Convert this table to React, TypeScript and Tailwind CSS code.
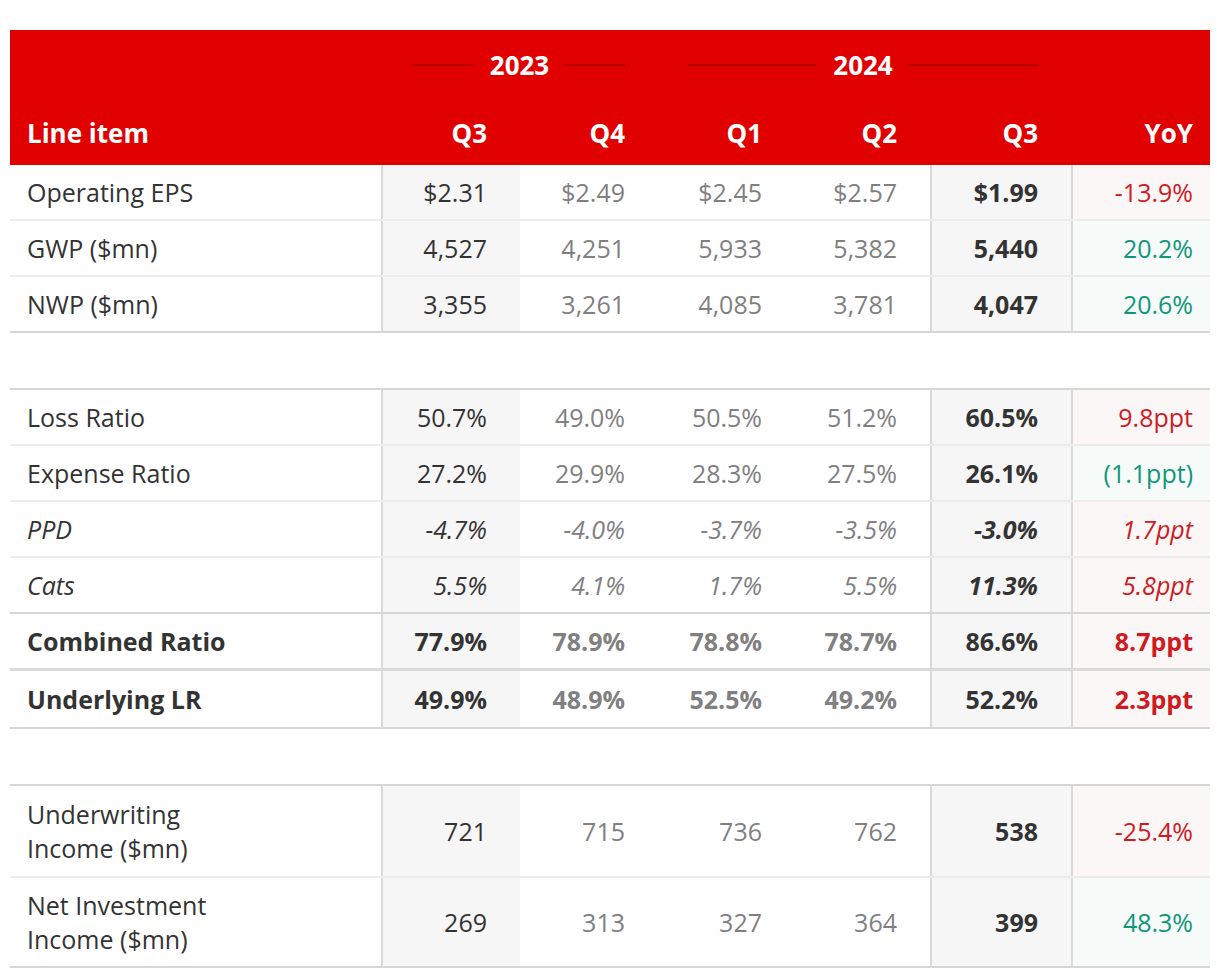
import React from "react";

type Tone = "red" | "green";

interface Row {
  label: string;
  q323: string;
  q4: string;
  q1: string;
  q2: string;
  q324: string;
  yoy: string;
  tone: Tone;
  style?: "italic" | "bold";
  height: string;
  border?: "section" | "double";
}

const sections: Row[][] = [
  [
    { label: "Operating EPS", q323: "$2.31", q4: "$2.49", q1: "$2.45", q2: "$2.57", q324: "$1.99", yoy: "-13.9%", tone: "red", height: "h-[56px]" },
    { label: "GWP ($mn)", q323: "4,527", q4: "4,251", q1: "5,933", q2: "5,382", q324: "5,440", yoy: "20.2%", tone: "green", height: "h-[56px]" },
    { label: "NWP ($mn)", q323: "3,355", q4: "3,261", q1: "4,085", q2: "3,781", q324: "4,047", yoy: "20.6%", tone: "green", height: "h-[56px]", border: "section" },
  ],
  [
    { label: "Loss Ratio", q323: "50.7%", q4: "49.0%", q1: "50.5%", q2: "51.2%", q324: "60.5%", yoy: "9.8ppt", tone: "red", height: "h-[56px]" },
    { label: "Expense Ratio", q323: "27.2%", q4: "29.9%", q1: "28.3%", q2: "27.5%", q324: "26.1%", yoy: "(1.1ppt)", tone: "green", height: "h-[56px]" },
    { label: "PPD", q323: "-4.7%", q4: "-4.0%", q1: "-3.7%", q2: "-3.5%", q324: "-3.0%", yoy: "1.7ppt", tone: "red", style: "italic", height: "h-[56px]" },
    { label: "Cats", q323: "5.5%", q4: "4.1%", q1: "1.7%", q2: "5.5%", q324: "11.3%", yoy: "5.8ppt", tone: "red", style: "italic", height: "h-[56px]", border: "section" },
    { label: "Combined Ratio", q323: "77.9%", q4: "78.9%", q1: "78.8%", q2: "78.7%", q324: "86.6%", yoy: "8.7ppt", tone: "red", style: "bold", height: "h-[57px]", border: "double" },
    { label: "Underlying LR", q323: "49.9%", q4: "48.9%", q1: "52.5%", q2: "49.2%", q324: "52.2%", yoy: "2.3ppt", tone: "red", style: "bold", height: "h-[58px]", border: "section" },
  ],
  [
    { label: "Underwriting Income ($mn)", q323: "721", q4: "715", q1: "736", q2: "762", q324: "538", yoy: "-25.4%", tone: "red", height: "h-[92px]" },
    { label: "Net Investment Income ($mn)", q323: "269", q4: "313", q1: "327", q2: "364", q324: "399", yoy: "48.3%", tone: "green", height: "h-[90px]", border: "section" },
  ],
];

function YearGroup({ year, className }: { year: string; className: string }) {
  return (
    <div className={`flex items-center gap-4 ${className}`}>
      <div className="h-[2px] flex-1 bg-[#b80000]" />
      <span className="font-bold">{year}</span>
      <div className="h-[2px] flex-1 bg-[#b80000]" />
    </div>
  );
}

function DataRow({ row }: { row: Row }) {
  const italic = row.style === "italic" ? "italic" : "";
  const bold = row.style === "bold" ? "font-bold" : "";
  const border =
    row.border === "section"
      ? "border-b-2 border-[#d6d6d6]"
      : row.border === "double"
        ? "border-b-[3px] border-[#dadada]"
        : "border-b-2 border-[#ececec]";
  const cell = "flex items-center justify-end pr-[33px]";

  return (
    <div className={`flex ${row.height} ${border} ${italic}`}>
      <div className={`w-[371px] flex items-center pl-[17px] text-[#333] ${bold}`}>
        <span className="max-w-[210px]">{row.label}</span>
      </div>
      <div className={`w-[139px] border-l-2 border-[#d9d9d9] bg-[#f6f6f6] text-[#333] ${cell} ${bold}`}>{row.q323}</div>
      <div className={`w-[138px] text-[#808080] ${cell} ${bold}`}>{row.q4}</div>
      <div className={`w-[137px] text-[#808080] ${cell} ${bold}`}>{row.q1}</div>
      <div className={`w-[135px] text-[#808080] ${cell} ${bold}`}>{row.q2}</div>
      <div className={`w-[141px] border-l-2 border-[#d9d9d9] bg-[#f6f6f6] text-[#333] font-bold ${cell}`}>{row.q324}</div>
      <div
        className={`w-[139px] border-l-2 border-[#d9d9d9] flex items-center justify-end pr-[17px] ${bold} ${
          row.tone === "red" ? "bg-[#fbf7f7] text-[#cf1a1f]" : "bg-[#f6faf9] text-[#11967a]"
        }`}
      >
        {row.yoy}
      </div>
    </div>
  );
}

export default function App() {
  return (
    <div className="min-h-screen bg-white pt-[30px] px-[10px] font-['Open_Sans',sans-serif] text-[25px] leading-[34px]">
      <div className="w-[1200px]">
        {/* header */}
        <div className="bg-[#e00000] text-white h-[135px] flex flex-col text-[26px]">
          <div className="h-[70px] flex items-center">
            <div className="w-[371px]" />
            <YearGroup year="2023" className="w-[277px] pl-[32px] pr-[32px]" />
            <YearGroup year="2024" className="w-[413px] pl-[30px] pr-[33px]" />
          </div>
          <div className="flex-1 flex items-center font-bold">
            <div className="w-[371px] pl-[17px]">Line item</div>
            <div className="w-[139px] text-right pr-[33px]">Q3</div>
            <div className="w-[138px] text-right pr-[33px]">Q4</div>
            <div className="w-[137px] text-right pr-[33px]">Q1</div>
            <div className="w-[135px] text-right pr-[33px]">Q2</div>
            <div className="w-[141px] text-right pr-[33px]">Q3</div>
            <div className="w-[139px] text-right pr-[17px]">YoY</div>
          </div>
        </div>

        {sections.map((rows, i) => (
          <div key={i}>
            {i > 0 && <div className="h-[57px] border-b-2 border-[#d6d6d6]" />}
            {rows.map((row) => (
              <DataRow key={row.label} row={row} />
            ))}
          </div>
        ))}
      </div>
    </div>
  );
}
